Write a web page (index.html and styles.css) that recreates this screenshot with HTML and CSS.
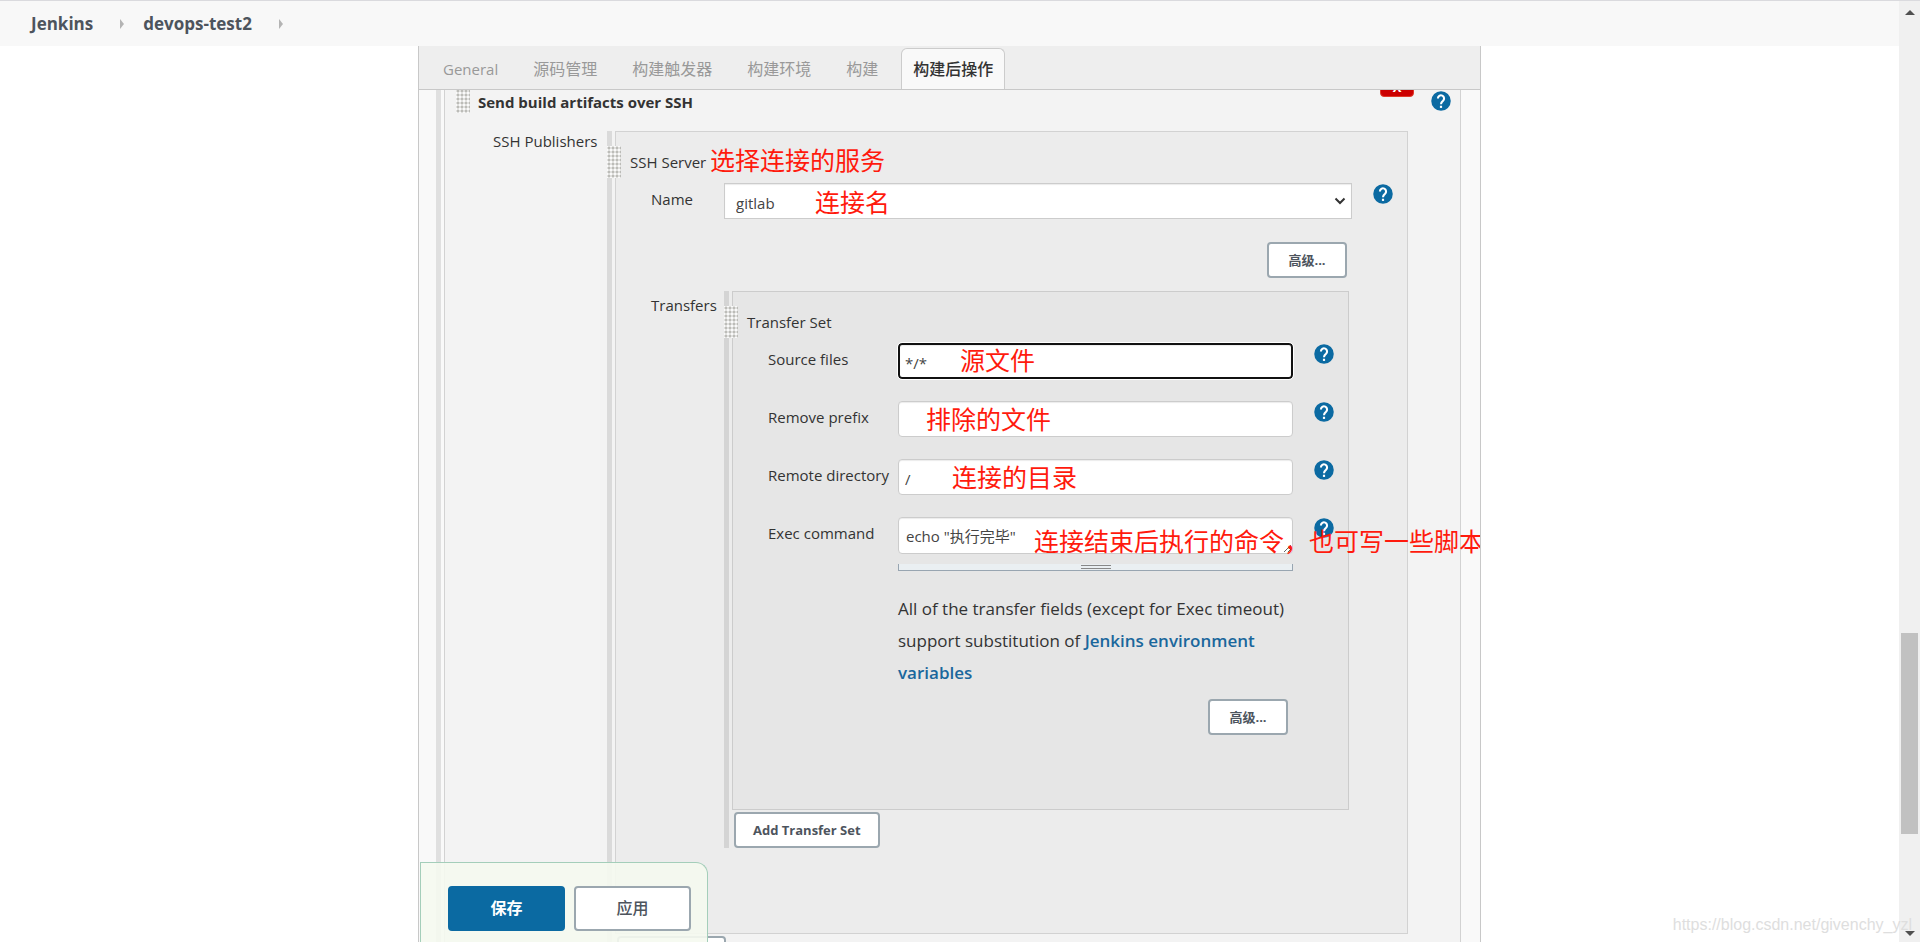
FILE: index.html
```html
<!DOCTYPE html>
<html lang="zh-CN">
<head>
<meta charset="utf-8">
<title>devops-test2 Config [Jenkins]</title>
<link rel="stylesheet" href="styles.css">
</head>
<body>
<svg class="sprite" aria-hidden="true">
  <symbol id="help" viewBox="0 0 24 24">
    <circle cx="12" cy="12" r="11.7" fill="#0b6aa2"/>
    <path d="M8.3 9a3.7 3.7 0 1 1 6 2.8c-1.5 1.1-2.3 1.9-2.3 4" fill="none" stroke="#fff" stroke-width="2.5"/>
    <rect x="10.7" y="17.7" width="2.6" height="2.6" fill="#fff"/>
  </symbol>
</svg>
<div class="view">
  <nav class="breadcrumbs">
    <a href="#">Jenkins</a><span class="arrow"></span>
    <a href="#">devops-test2</a><span class="arrow"></span>
  </nav>
  <main class="config">
    <div class="tabs">
      <a class="tab latin" href="#">General</a>
      <a class="tab" href="#">源码管理</a>
      <a class="tab" href="#">构建触发器</a>
      <a class="tab" href="#">构建环境</a>
      <a class="tab" href="#">构建</a>
      <a class="tab active" href="#">构建后操作</a>
    </div>
    <form class="scroller">
      <div class="group outer">
        <section class="box level1">
          <header class="step-head">
            <span class="grip"></span>
            <h2>Send build artifacts over SSH</h2>
            <button type="button" class="delete">X</button>
            <button type="button" class="help" aria-label="Help"><svg><use href="#help"/></svg></button>
          </header>
          <div class="publishers">
            <div class="label">SSH Publishers</div>
            <div class="group">
              <section class="box level2">
                <span class="grip side"></span>
                <h3 class="box-head">SSH Server <span class="note title-note">选择连接的服务</span></h3>
                <div class="row name-row">
                  <label class="label" for="name">Name</label>
                  <div class="field">
                    <select id="name"><option>gitlab</option></select>
                    <svg class="chevron" viewBox="0 0 12 8" aria-hidden="true"><path d="M1.5 1.5 6 6l4.500-4.500" fill="none" stroke="#333" stroke-width="2"/></svg>
                    <span class="note name-note">连接名</span>
                  </div>
                  <button type="button" class="help" aria-label="Help"><svg><use href="#help"/></svg></button>
                </div>
                <div class="row">
                  <div class="field advanced"><button type="button" class="btn">高级...</button></div>
                </div>
                <div class="row transfers">
                  <div class="label">Transfers</div>
                  <div class="group">
                    <section class="box level3">
                      <span class="grip side"></span>
                      <h3 class="box-head">Transfer Set</h3>
                      <div class="row">
                        <label class="label" for="source">Source files</label>
                        <div class="field">
                          <input class="focused" id="source" type="text" value="*/*">
                          <span class="note source-note">源文件</span>
                        </div>
                        <button type="button" class="help" aria-label="Help"><svg><use href="#help"/></svg></button>
                      </div>
                      <div class="row">
                        <label class="label" for="prefix">Remove prefix</label>
                        <div class="field">
                          <input id="prefix" type="text">
                          <span class="note prefix-note">排除的文件</span>
                        </div>
                        <button type="button" class="help" aria-label="Help"><svg><use href="#help"/></svg></button>
                      </div>
                      <div class="row">
                        <label class="label" for="remote">Remote directory</label>
                        <div class="field">
                          <input id="remote" type="text" value="/">
                          <span class="note remote-note">连接的目录</span>
                        </div>
                        <button type="button" class="help" aria-label="Help"><svg><use href="#help"/></svg></button>
                      </div>
                      <div class="row">
                        <label class="label" for="exec">Exec command</label>
                        <div class="field">
                          <textarea id="exec" rows="1">echo "执行完毕"</textarea>
                          <div class="resizer"></div>
                          <span class="note exec-note">连接结束后执行的命令，也可写一些脚本</span>
                        </div>
                        <button type="button" class="help" aria-label="Help"><svg><use href="#help"/></svg></button>
                      </div>
                      <div class="row hint-row">
                        <p class="field hint">All of the transfer fields (except for Exec timeout) support substitution of <a href="#">Jenkins environment variables</a></p>
                      </div>
                      <div class="row last">
                        <div class="field advanced"><button type="button" class="btn">高级...</button></div>
                      </div>
                    </section>
                    <button type="button" class="btn add">Add Transfer Set</button>
                  </div>
                </div>
              </section>
              <button type="button" class="btn add">Add Server</button>
            </div>
          </div>
        </section>
      </div>
      <div class="sticker">
        <button type="button" class="action primary">保存</button>
        <button type="button" class="action">应用</button>
      </div>
    </form>
  </main>
</div>
<aside class="scrollbar" aria-hidden="true">
  <span class="up"></span>
  <span class="thumb"></span>
  <span class="down"></span>
</aside>
<span class="watermark">https://blog.csdn.net/givenchy_yzl</span>
</body>
</html>
```

FILE: styles.css
```css
* { box-sizing: border-box; }

body {
  margin: 0;
  height: 100vh;
  display: flex;
  position: relative;
  overflow: hidden;
  background: #fff;
  color: #333;
  font: 15px/24px "Open Sans", "Noto Sans CJK SC", sans-serif;
}

a { text-decoration: none; color: inherit; }
button, input, select, textarea { font: inherit; color: inherit; margin: 0; }
h2, h3, p { margin: 0; }
.sprite { position: absolute; width: 0; height: 0; }

.view { flex: 1; min-width: 0; display: flex; flex-direction: column; }

/* Breadcrumbs */
.breadcrumbs {
  flex: none;
  display: flex;
  align-items: center;
  height: 46px;
  padding-left: 31px;
  border-top: 1px solid #dadade;
  background: #f8f8f8;
  color: #4d545d;
  font-size: 17px;
  font-weight: 700;
}
.arrow {
  margin: 0 19px 0 27px;
  border-left: 4px solid #b4b4b4;
  border-top: 5px solid transparent;
  border-bottom: 5px solid transparent;
}

/* Config panel */
.config {
  flex: 1;
  min-height: 0;
  width: 100%;
  max-width: 1063px;
  margin: 0 auto;
  display: flex;
  flex-direction: column;
  border: solid #c8c8c8;
  border-width: 0 1px;
  background: #f9f9f9;
}
.tabs {
  flex: none;
  display: flex;
  align-items: flex-end;
  gap: 11px;
  height: 44px;
  padding-left: 12px;
  border-bottom: 1px solid #c8c8c8;
  background: #eee;
  color: #999;
  font-size: 16px;
}
.tab {
  height: 41px;
  padding: 0 11px;
  border: 1px solid transparent;
  border-bottom: 0;
  line-height: 40px;
}
.tab.latin { font-size: 15px; }
.tab.active {
  border-color: #ccc;
  border-radius: 6px 6px 0 0;
  background: #f9f9f9;
  color: #333;
  font-weight: 500;
}
.scroller {
  flex: 1;
  min-height: 0;
  position: relative;
  overflow: hidden;
  padding: 0 19px 0 17px;
}

/* Nested groups, each with a thick bar on the left */
.group {
  min-width: 0;
  border-left: 5px solid #dadada;
  padding-left: 3px;
}
.outer { margin-top: -20px; border-color: #e0e0e0; }
.box { position: relative; border: 1px solid #d2d2d2; }
.level1 { background: #f3f3f3; }
.level2 { background: #ececec; padding-bottom: 85px; }
.level3 { background: #e6e6e6; border-color: #ccc; padding-bottom: 74px; }
.level2 .group { border-color: #d4d4d4; }

.grip {
  width: 14px;
  height: 32px;
  background: #fafafa radial-gradient(circle at 2px 2px, #bcbcb8 1px, #fafafa 2px) 0 0 / 4px 4px;
}
.side { position: absolute; left: -9px; top: 14px; }

.step-head {
  display: flex;
  height: 60px;
  padding: 10px 9px 0 11px;
}
.step-head h2 { flex: 1; padding-left: 8px; font-size: 15px; line-height: 42px; }
.delete {
  height: 20px;
  width: 34px;
  margin: -4px 17px 0 0;
  padding: 0;
  border: 1px solid #e03a2a;
  border-radius: 4px;
  background: #c00;
  color: #fff;
  font-size: 13px;
  font-weight: 700;
  line-height: 18px;
}
.help {
  display: block;
  width: 20px;
  height: 20px;
  margin: 1px 0 0 21px;
  padding: 0;
  border: 0;
  background: none;
}
.help svg { display: block; width: 20px; height: 20px; }
.step-head .help { margin: 10px 0 0; }

.publishers {
  display: grid;
  grid-template-columns: 162px minmax(0, 1fr);
  padding-right: 52px;
}
.publishers > .label { padding: 0 0 0 48px; line-height: 20px; }

.box-head {
  padding: 18px 0 9px 14px;
  font-size: 15px;
  font-weight: 400;
  white-space: nowrap;
}
.row {
  display: grid;
  grid-template-columns: 108px minmax(0, 1fr) 55px;
  margin-bottom: 22px;
}
.name-row { margin-bottom: 23px; }
.level3 .row { grid-template-columns: 165px minmax(0, 1fr) 55px; }
.level3 .last, .transfers.row { margin-bottom: 0; }
.label { padding: 4px 0 0 35px; white-space: nowrap; }
.transfers > .label { padding-top: 2px; }
.transfers > .group { margin-right: 3px; grid-column: 2 / 4; margin-right: 58px; }
.field { position: relative; grid-column: 2; }

input, select, textarea {
  display: block;
  width: 100%;
  height: 36px;
  padding: 4px 6px 0;
  border: 1px solid #ccc;
  border-radius: 4px;
  background: #fff;
  box-shadow: inset 0 1px 1px rgba(0, 0, 0, 0.08);
  color: #444;
}
select { appearance: none; padding: 4px 30px 0 11px; border-radius: 0; }
.chevron { position: absolute; right: 6px; top: 14px; width: 12px; height: 8px; pointer-events: none; }
textarea { height: 37px; padding: 6px 7px; resize: both; overflow: hidden; }
.focused { border: 2px solid #111; outline: 1px solid #fff; padding: 3px 5px 0; }
.resizer {
  height: 7px;
  margin-top: 10px;
  border: 1px solid #98a5b1;
  border-top: 0;
  background: linear-gradient(#888 1px, #eaeff2 1px, #eaeff2 3px, #888 3px, #888 4px, transparent 4px) center 1px / 30px 5px no-repeat #eaeff2;
}
.hint { font-size: 17px; line-height: 32px; }
.hint a { color: #1a679c; font-weight: 600; }
.level3 .hint-row { margin-bottom: 10px; }

.advanced { display: flex; justify-content: flex-end; padding-right: 5px; }
.row:has(+ .transfers) { margin-bottom: 13px; }
.btn {
  min-width: 80px;
  height: 36px;
  padding: 0 17px;
  border: 2px solid #9ba7af;
  border-radius: 4px;
  background: #fff;
  color: #4d545d;
  font-size: 13px;
  font-weight: 700;
  line-height: 32px;
  white-space: nowrap;
}
.add { display: block; margin: 2px 0 0 2px; }

/* Save bar pinned to the bottom of the panel */
.sticker {
  position: absolute;
  left: 1px;
  bottom: 0;
  display: flex;
  gap: 9px;
  padding: 23px 16px 11px 27px;
  border: 1px solid #a4ceba;
  border-bottom: 0;
  border-radius: 0 12px 0 0;
  background: rgba(245, 250, 239, 0.9);
}
.action {
  width: 117px;
  height: 45px;
  padding: 0 0 2px;
  border: 2px solid #9ba7af;
  border-radius: 4px;
  background: #fff;
  color: #4d545d;
  font-size: 16px;
  font-weight: 500;
}
.primary { border-color: #0b6aa2; background: #0b6aa2; color: #fff; font-weight: 700; }

/* Red remarks over the form */
.note {
  position: absolute;
  z-index: 2;
  color: #ff1a0d;
  font: 25px/30px "Noto Sans CJK SC", sans-serif;
  white-space: nowrap;
  pointer-events: none;
}
.title-note { left: 94px; top: 12px; }
.name-note { left: 91px; top: 3px; }
.source-note { left: 62px; top: 1px; }
.prefix-note { left: 28px; top: 2px; }
.remote-note { left: 54px; top: 2px; }
.exec-note { left: 136px; top: 8px; }

/* Window scrollbar */
.scrollbar {
  flex: none;
  width: 21px;
  display: grid;
  grid-template-rows: 10px 623fr 201fr 97fr 11px;
  justify-items: center;
  background: #f0f0f0;
  border-top: 1px solid #dadade;
}
.up, .down { border: 5px solid transparent; border-top-width: 0; border-bottom: 5px solid #505050; height: 5px; align-self: end; margin-top: 9px; }
.up { grid-row: 1; align-self: start; }
.thumb { grid-row: 3; width: 17px; background: #c1c1c1; }
.down { grid-row: 5; align-self: start; margin: 0 0 6px; border-top: 5px solid #505050; border-bottom: 0; }

.watermark {
  position: absolute;
  right: 8px;
  bottom: 6px;
  color: #dedede;
  font: 16px/22px "Liberation Sans", sans-serif;
}
```
